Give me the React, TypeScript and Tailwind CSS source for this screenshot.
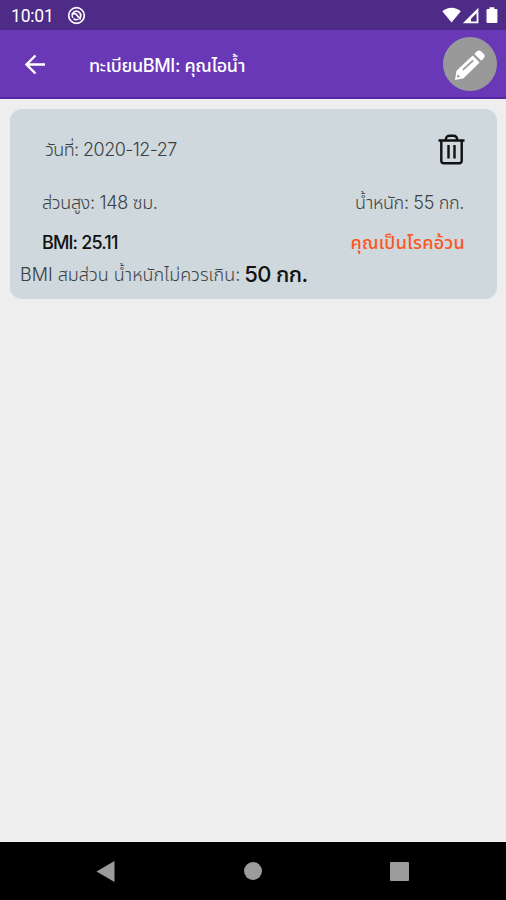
import type { ReactNode } from "react";

const record = {
  date: "2020-12-27",
  height: 148,
  weight: 55,
  bmi: "25.11",
  status: "คุณเป็นโรคอ้วน",
  maxWeight: 50,
};

function StatusBar() {
  return (
    <div className="flex h-[30px] shrink-0 items-center bg-[#4d2b86] pl-[11px] pr-2 text-white">
      <span className="pt-[3px] font-['Roboto',sans-serif] text-[17.5px] leading-none tracking-[-0.2px]">10:01</span>
      <svg className="ml-[13px] size-[19px]" viewBox="0 0 19 19" fill="none" stroke="currentColor">
        <circle cx="9.5" cy="9.5" r="7.8" strokeWidth="1.7" />
        <path d="M5.8 11.8A4.5 4.5 0 0 1 7.2 5.7a4.500 4.500 0 0 1 5.900 6.400" strokeWidth="1.6" />
        <path d="M4.8 8.3q3.600-2 5.400 1.200l3.400 4M6.500 12.600q2.500 2 4.800.5" strokeWidth="1.7" />
      </svg>
      <svg className="ml-auto h-[18px] w-[56px]" viewBox="0 0 56 18" fill="currentColor">
        <path d="M.3 5.200C5.500.5 13.500.5 18.800 5.200L9.600 16.400z" />
        <path fillRule="evenodd" d="M36.400 1.800V17.200H20.800zM34.600 7.200L29 12.700V15.400H34.600z" />
        <path d="M47.500 1.200h4.800v1.900h2.100q1 0 1 1v12q0 1-1 1h-8.900q-1 0-1-1v-12q0-1 1-1h2z" />
      </svg>
    </div>
  );
}

function Header() {
  return (
    <header className="flex h-[69px] shrink-0 items-center border-b-2 border-[#5925a8] bg-[#6838b6] pl-[25px] pr-[9px] text-white">
      <button aria-label="กลับ">
        <svg className="size-5" viewBox="0 0 20 20" fill="none" stroke="currentColor" strokeWidth="2.4">
          <path d="M20 10.500H2M10.500 1.500L1.500 10.500l9 9" />
        </svg>
      </button>
      <h1 className="ml-11 whitespace-nowrap pt-1 text-[18px] font-medium leading-none tracking-[-0.34px]">
        ทะเบียนBMI: คุณไอน้ำ
      </h1>
      <button
        aria-label="แก้ไข"
        className="ml-auto flex size-[54px] items-center justify-center rounded-full bg-[#999] pt-[3px]"
      >
        <svg className="size-[32px]" viewBox="0 0 32 32" fill="currentColor">
          <path
            fillRule="evenodd"
            d="M1 31L2.500 21.800 18.700 6.500l6.900 6.900L9.600 29.300zM8.300 20.300l1.200 1.200L19.800 12l-1.300-1.300zM3.500 25.300l-.5 3.300 3.400-.7z"
          />
          <path d="M20.400 4.900L23 2.200q2-1.600 4 0l3 3q1.600 2 0 3.800l-2.700 2.700z" />
        </svg>
      </button>
    </header>
  );
}

function TrashIcon() {
  return (
    <svg className="h-[31px] w-[27px]" viewBox="0 0 27 31" fill="none" stroke="currentColor" strokeWidth="2.4">
      <path d="M.5 6.500h26M3.300 6.500v20.200q0 2.500 2.500 2.500h15.400q2.500 0 2.500-2.500V6.500M7.800 6q0-4.300 4-4.300h3.400q4 0 4 4.300" />
      <path d="M10.500 11v13.500M16.500 11v13.500" />
    </svg>
  );
}

function Row({ children, className }: { children: ReactNode; className: string }) {
  return <div className={`flex items-center justify-between whitespace-nowrap ${className}`}>{children}</div>;
}

function RecordCard() {
  return (
    <section className="mx-[10px] mt-[10px] h-[190px] w-[487px] rounded-xl bg-[#cfd8dc] text-[18px] font-light text-[#3c4043]">
      <Row className="h-20 pl-[35px] pr-8">
        <span className="tracking-[-0.55px]">วันที่: {record.date}</span>
        <button aria-label="ลบ" className="text-[#111]">
          <TrashIcon />
        </button>
      </Row>
      <Row className="h-[27px] pl-8 pr-[33px]">
        <span className="tracking-[-0.33px]">ส่วนสูง: {record.height} ซม.</span>
        <span className="tracking-[-0.35px]">น้ำหนัก: {record.weight} กก.</span>
      </Row>
      <Row className="h-[53px] pl-8 pr-8 font-medium">
        <span className="tracking-[-0.85px] text-[#111]">BMI: {record.bmi}</span>
        <span className="tracking-[0.25px] text-[#fb561f]">{record.status}</span>
      </Row>
      <p className="flex h-[10px] items-center gap-1 whitespace-nowrap pl-[10px]">
        <span>BMI สมส่วน น้ำหนักไม่ควรเกิน:</span>
        <span className="text-[22px] font-medium tracking-[-0.6px] text-[#111]">{record.maxWeight} กก.</span>
      </p>
    </section>
  );
}

function NavBar() {
  return (
    <nav className="flex h-[58px] shrink-0 items-center justify-between bg-black pl-24 pr-[97px] text-[#9b9b9b]">
      <svg className="h-[21px] w-[19px]" viewBox="0 0 19 21" fill="currentColor">
        <path d="M18.500 0v21L.5 10.500z" />
      </svg>
      <div className="size-[18px] rounded-full bg-current" />
      <div className="size-[19px] rounded-[1px] bg-current" />
    </nav>
  );
}

export default function App() {
  return (
    <div className="flex h-[900px] w-[506px] flex-col overflow-hidden bg-[#eee] font-['Inter','Noto_Sans_Thai','Noto_Sans',sans-serif]">
      <StatusBar />
      <Header />
      <main className="flow-root flex-1">
        <RecordCard />
      </main>
      <NavBar />
    </div>
  );
}
